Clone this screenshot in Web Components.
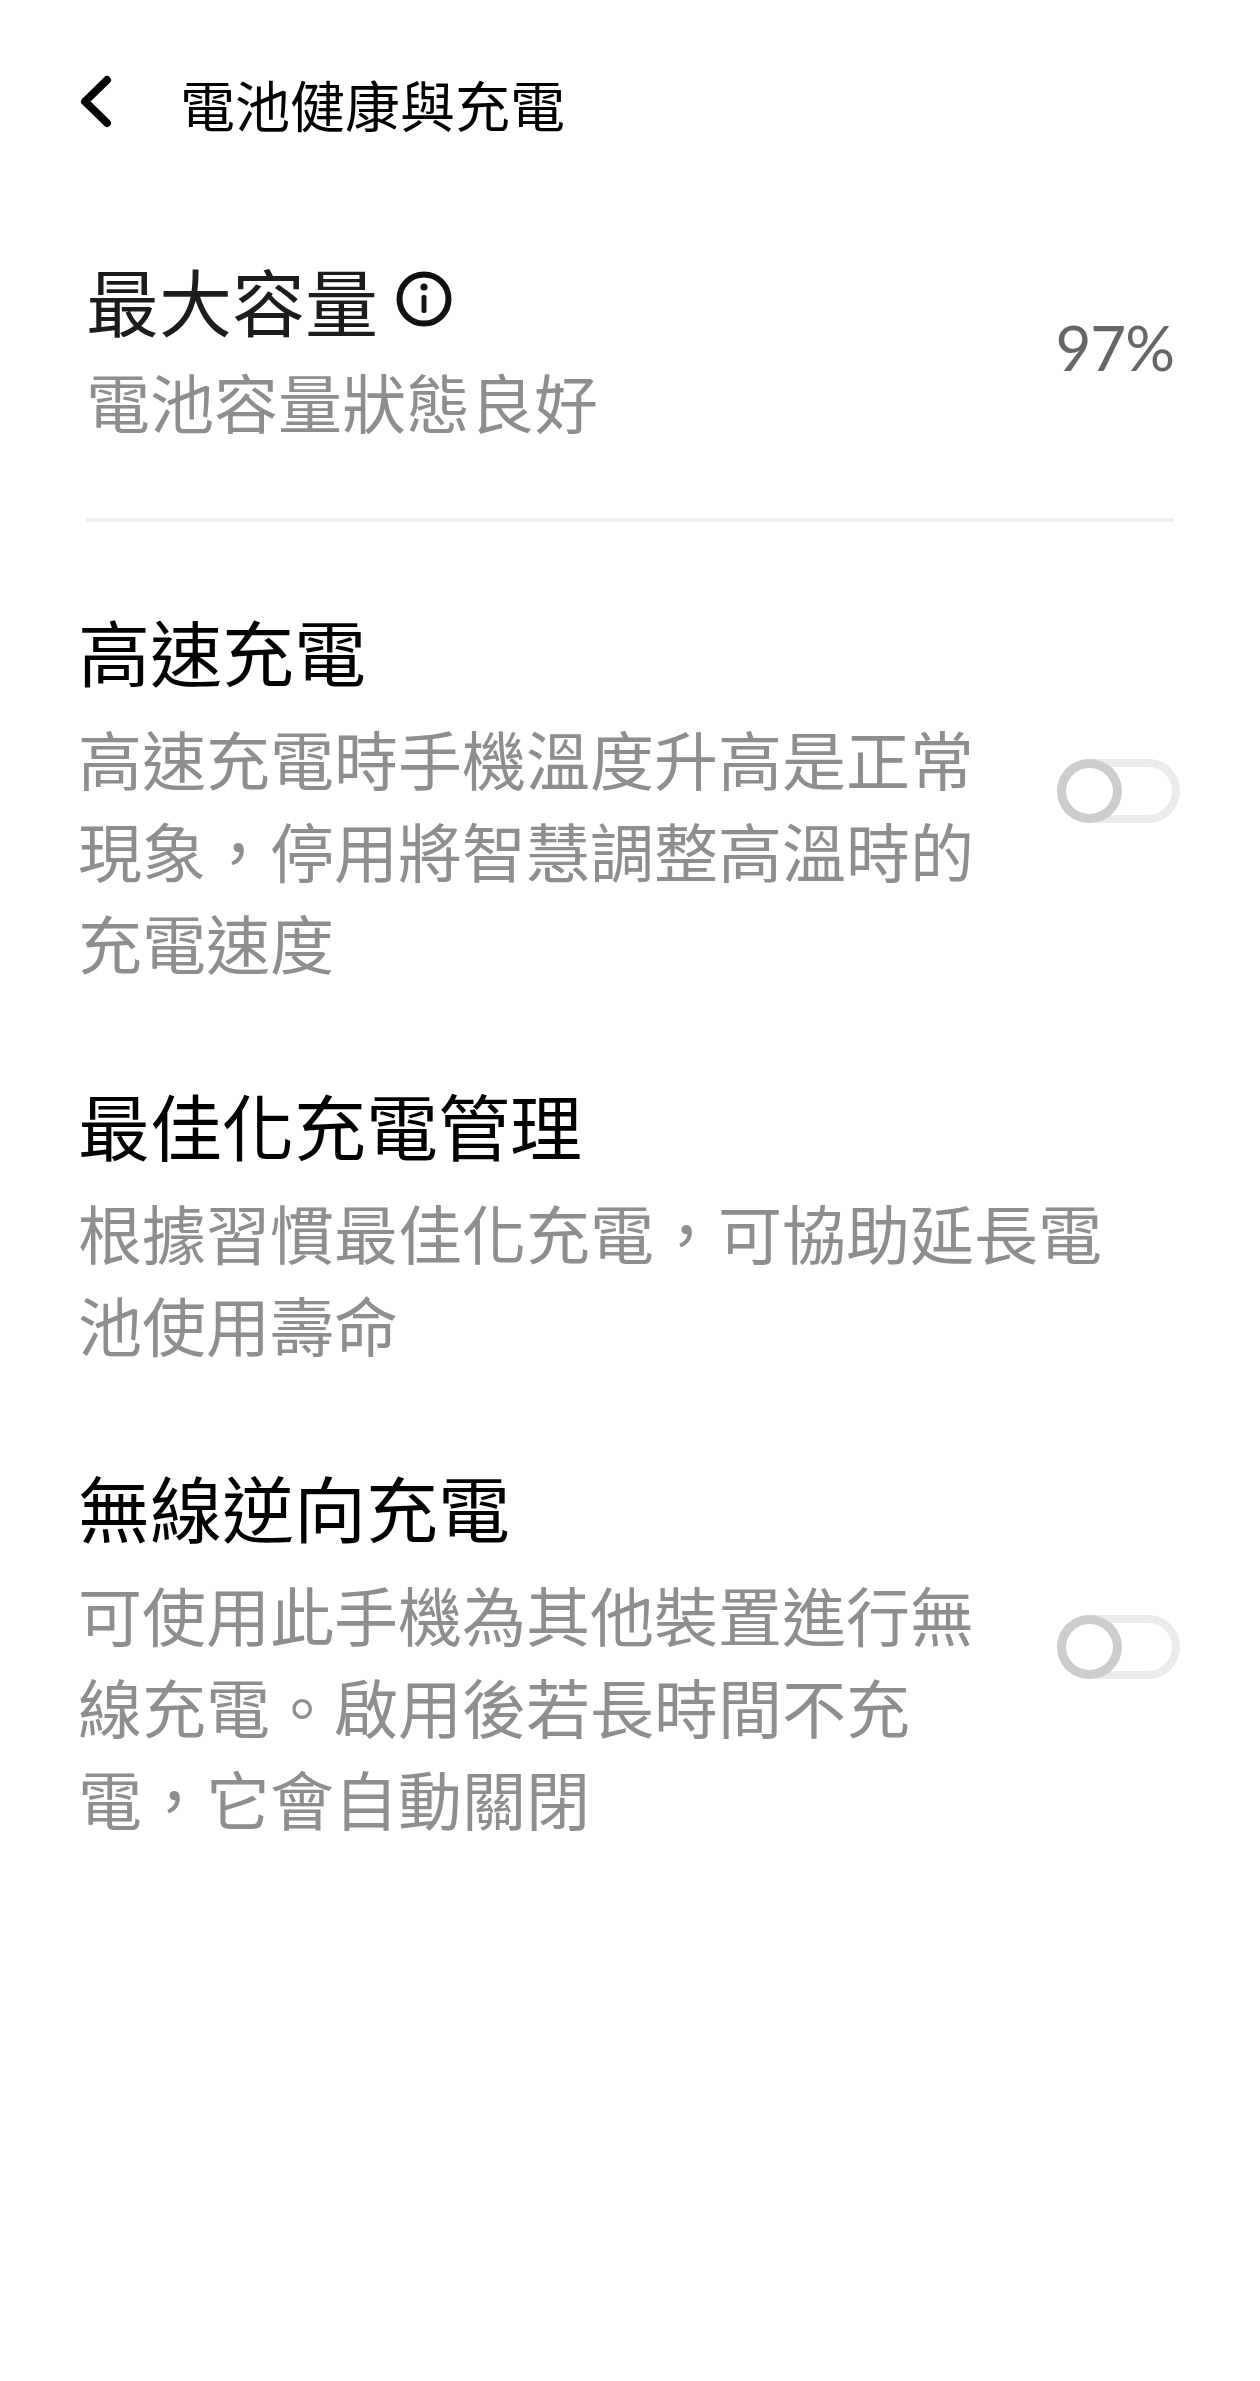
<!DOCTYPE html>
<html lang="zh-Hant">
<head>
<meta charset="utf-8">
<title>電池健康與充電</title>
<style>
  html, body { margin: 0; background: #fff; }
  body { font-family: "Noto Sans CJK TC", "Noto Sans", sans-serif; height: 2381px; overflow: hidden; }
</style>
</head>
<body>
<app-bar>電池健康與充電</app-bar>
<capacity-row value="97%" sub="電池容量狀態良好">最大容量</capacity-row>
<setting-row heading="高速充電" toggle style="--row-top:76px">高速充電時手機溫度升高是正常現象，停用將智慧調整高溫時的充電速度</setting-row>
<setting-row heading="最佳化充電管理" style="--row-top:85px;--text-w:1030px">根據習慣最佳化充電，可協助延長電池使用壽命</setting-row>
<setting-row heading="無線逆向充電" toggle style="--row-top:85px">可使用此手機為其他裝置進行無線充電。啟用後若長時間不充電，它會自動關閉</setting-row>

<script>
class AppBar extends HTMLElement {
  constructor() {
    super();
    this.attachShadow({ mode: 'open' }).innerHTML = `
      <style>
        :host { display: flex; align-items: center; height: 104px; padding: 52px 0 0 80px; color: #000; }
        svg { width: 38px; height: 58px; flex: none; margin-right: 62px; }
        span { font-size: 55px; line-height: 104px; margin-top: -3px; }
      </style>
      <svg viewBox="0 0 38 58"><path d="M27 5 5 26.5 27 48" fill="none" stroke="#000" stroke-width="8" stroke-linecap="round" stroke-linejoin="round"/></svg>
      <span><slot></slot></span>`;
  }
}

class CapacityRow extends HTMLElement {
  constructor() {
    super();
    this.attachShadow({ mode: 'open' }).innerHTML = `
      <style>
        :host { display: flex; justify-content: space-between; align-items: center; margin: 94px 86px 0 86px; height: 196px; padding-bottom: 72px; border-bottom: 4px solid #f1f1f1; }
        .title { display: flex; align-items: center; font-size: 73px; height: 98px; line-height: 98px; padding-bottom: 6px; color: #1c1c1e; }
        svg { width: 58px; height: 58px; margin-left: 17px; }
        .sub { font-size: 64px; line-height: 92px; color: #8e8e8e; }
        .value { font-family: "Lato", sans-serif; font-size: 62px; letter-spacing: -1px; color: #666; margin-top: -3px; }
      </style>
      <div>
        <div class="title"><slot></slot>
          <svg viewBox="0 0 58 58"><circle cx="29" cy="29" r="24.5" fill="none" stroke="#111" stroke-width="6"/><circle cx="29" cy="17" r="3.6" fill="#111"/><rect x="26.5" y="25" width="5" height="18" rx="2" fill="#111"/></svg>
        </div>
        <div class="sub" id="sub"></div>
      </div>
      <div class="value" id="value"></div>`;
  }
  connectedCallback() {
    this.shadowRoot.getElementById('sub').textContent = this.getAttribute('sub');
    this.shadowRoot.getElementById('value').textContent = this.getAttribute('value');
  }
}

class ToggleSwitch extends HTMLElement {
  constructor() {
    super();
    this.attachShadow({ mode: 'open' }).innerHTML = `
      <style>
        :host { display: block; position: relative; box-sizing: border-box; width: 123px; height: 64px; border: 8px solid #ebebeb; border-radius: 32px; }
        i { position: absolute; left: -8px; top: -8px; box-sizing: border-box; width: 65px; height: 64px; border: 9px solid #cdcdcd; border-radius: 50%; background: #fff; }
      </style>
      <i></i>`;
  }
}

class SettingRow extends HTMLElement {
  constructor() {
    super();
    this.attachShadow({ mode: 'open' }).innerHTML = `
      <style>
        :host { display: flex; align-items: center; justify-content: space-between; margin: var(--row-top, 0) 80px 0 78px; }
        .text { width: var(--text-w, 900px); }
        .heading { font-size: 72px; line-height: 104px; color: #000; margin-bottom: 9px; }
        .desc { font-size: 64px; line-height: 92px; color: #8e8e8e; }
        toggle-switch { margin-top: -4px; }
      </style>
      <div class="text">
        <div class="heading" id="heading"></div>
        <div class="desc"><slot></slot></div>
      </div>`;
  }
  connectedCallback() {
    this.shadowRoot.getElementById('heading').textContent = this.getAttribute('heading');
    if (this.hasAttribute('toggle')) {
      this.shadowRoot.appendChild(document.createElement('toggle-switch'));
    }
  }
}

customElements.define('app-bar', AppBar);
customElements.define('capacity-row', CapacityRow);
customElements.define('toggle-switch', ToggleSwitch);
customElements.define('setting-row', SettingRow);
</script>
</body>
</html>
